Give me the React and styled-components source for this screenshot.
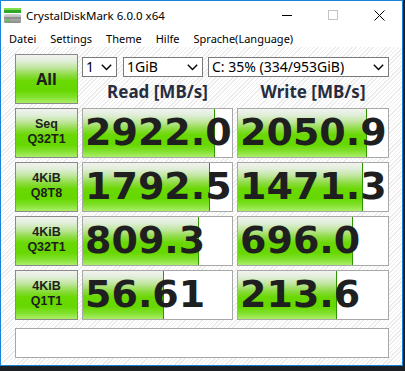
import React from 'react';
import styled, { createGlobalStyle } from 'styled-components';

const Global = createGlobalStyle`
  html, body { margin: 0; padding: 0; background: #1c1f24; }
  body { width: 405px; height: 371px; overflow: hidden; }
  #root { width: 405px; height: 371px; }
`;

const GREEN = `linear-gradient(180deg,
  #f1f3ef 0%, #e2eedb 12%, #bfe69c 27%, #8fdc45 41%, #6ad804 54%,
  #66d800 74%, #80e02a 87%, #aaee68 100%)`;

const Window = styled.div`
  width: 403px;
  height: 366px;
  box-sizing: border-box;
  border: 1px solid #1883d7;
  display: flex;
  flex-direction: column;
  background: #fff;
  font-family: "Noto Sans", "Open Sans", sans-serif;
  color: #000;
`;

const TitleBar = styled.div`
  height: 28px;
  display: flex;
  align-items: center;
  background: #fff;
`;

const AppIcon = styled.svg`
  margin-left: 3px;
  flex: none;
`;

const Title = styled.div`
  margin-left: 5px;
  font-size: 11.5px;
  flex: 1;
`;

const CaptionButton = styled.div`
  width: 46px;
  height: 28px;
  display: flex;
  align-items: center;
  justify-content: center;
`;

const MenuBar = styled.div`
  height: 18px;
  display: flex;
  align-items: center;
  padding-left: 1px;
  background: #fff;
  font-size: 11px;
`;

const MenuItem = styled.span`
  padding: 0 7px;
`;

const Client = styled.div`
  flex: 1;
  padding: 7px 0 0 14px;
  background: repeating-linear-gradient(135deg, #ffffff 0px, #ffffff 2px, #ebebeb 2px, #ebebeb 3px);
`;

const Grid = styled.div`
  display: grid;
  grid-template-columns: 63px 151px 152px;
  grid-auto-rows: 50px;
  column-gap: 4px;
  row-gap: 4px;
`;

const GreenButton = styled.div`
  box-sizing: border-box;
  border: 1px solid #8a8a8a;
  background: ${GREEN};
  display: flex;
  flex-direction: column;
  align-items: center;
  justify-content: center;
  font-weight: 700;
  color: #1e1e1e;
  font-family: ${p => (p.$big ? '"Noto Sans", sans-serif' : '"Liberation Sans", Arial, sans-serif')};
  font-size: ${p => (p.$big ? '16px' : '12.5px')};
  line-height: ${p => (p.$big ? '20px' : '14.5px')};
  padding-bottom: ${p => (p.$big ? '1px' : '3px')};
`;

const TopPanel = styled.div`
  grid-column: 2 / 4;
  display: flex;
  flex-direction: column;
`;

const SelectRow = styled.div`
  display: flex;
  margin-top: 3px;
  height: 20px;
`;

const DropDown = styled.div`
  box-sizing: border-box;
  width: ${p => p.$w || 'auto'};
  flex: ${p => (p.$w ? 'none' : '1')};
  margin-right: ${p => p.$mr || '0'};
  height: 20px;
  border: 1px solid #7a7a7a;
  background: #fff;
  display: flex;
  align-items: center;
  padding: 0 4px 0 3px;
  font-size: 14px;
  line-height: 18px;
  color: #000;
`;

const DropText = styled.span`
  flex: 1;
  white-space: nowrap;
`;

const HeaderRow = styled.div`
  display: grid;
  grid-template-columns: 151px 152px;
  column-gap: 4px;
  margin-top: 5px;
`;

const Header = styled.div`
  text-align: center;
  font-size: 17px;
  line-height: 20px;
  font-weight: 700;
  color: #262d40;
`;

const BarCell = styled.div`
  position: relative;
  box-sizing: border-box;
  border: 1px solid #a8a8a8;
  background: #fff;
  overflow: hidden;
`;

const Fill = styled.div`
  position: absolute;
  left: 0;
  top: 0;
  bottom: 0;
  box-sizing: border-box;
  border-right: 1px solid #2e9400;
  background: ${GREEN};
`;

const Value = styled.div`
  position: relative;
  padding-left: 2px;
  font-family: "DejaVu Sans", Verdana, sans-serif;
  font-weight: 700;
  font-size: 38px;
  line-height: 47px;
  color: #1f1f1f;
  white-space: nowrap;
`;

const Comment = styled.div`
  margin-top: 8px;
  width: 374px;
  height: 30px;
  box-sizing: border-box;
  border: 1px solid #a8a8a8;
  background: #fff;
`;

const Chevron = () => (
  <svg width="11" height="7" viewBox="0 0 11 7">
    <path d="M0.8 0.8 L5.5 5.5 L10.2 0.8" fill="none" stroke="#000" strokeWidth="1.4" />
  </svg>
);

const rows = [
  { l1: 'Seq', l2: 'Q32T1', r: '2922.0', rp: 132, w: '2050.9', wp: 129 },
  { l1: '4KiB', l2: 'Q8T8', r: '1792.5', rp: 127, w: '1471.3', wp: 125 },
  { l1: '4KiB', l2: 'Q32T1', r: '809.3', rp: 116, w: '696.0', wp: 115 },
  { l1: '4KiB', l2: 'Q1T1', r: '56.61', rp: 81, w: '213.6', wp: 99 },
];

export default function App() {
  return (
    <>
      <Global />
      <Window>
        <TitleBar>
          <AppIcon width="17" height="15" viewBox="0 0 17 15">
            <defs>
              <linearGradient id="drv" x1="0" y1="0" x2="0" y2="1">
                <stop offset="0" stopColor="#d4d4d4" />
                <stop offset="1" stopColor="#8a8a8a" />
              </linearGradient>
            </defs>
            <rect x="0" y="0" width="17" height="2" fill="#7fe04a" />
            <rect x="0" y="2" width="17" height="3" fill="#2fa82a" />
            <rect x="0" y="6" width="17" height="9" rx="1.5" fill="url(#drv)" />
            <rect x="0" y="9.5" width="17" height="1" fill="#6d6d6d" />
            <rect x="2" y="11.5" width="4" height="2" fill="#4fd040" />
          </AppIcon>
          <Title>CrystalDiskMark 6.0.0 x64</Title>
          <CaptionButton>
            <svg width="10" height="10" viewBox="0 0 10 10">
              <rect x="0" y="5" width="10" height="1" fill="#000" />
            </svg>
          </CaptionButton>
          <CaptionButton>
            <svg width="10" height="10" viewBox="0 0 10 10">
              <rect x="0.5" y="0.5" width="9" height="9" fill="none" stroke="#c4c4c4" />
            </svg>
          </CaptionButton>
          <CaptionButton>
            <svg width="11" height="11" viewBox="0 0 11 11">
              <path d="M0.5 0.5 L10.5 10.5 M10.5 0.5 L0.5 10.5" stroke="#000" strokeWidth="1" fill="none" />
            </svg>
          </CaptionButton>
        </TitleBar>
        <MenuBar>
          <MenuItem>Datei</MenuItem>
          <MenuItem>Settings</MenuItem>
          <MenuItem>Theme</MenuItem>
          <MenuItem>Hilfe</MenuItem>
          <MenuItem>Sprache(Language)</MenuItem>
        </MenuBar>
        <Client>
          <Grid>
            <GreenButton $big>All</GreenButton>
            <TopPanel>
              <SelectRow>
                <DropDown $w="35px" $mr="6px">
                  <DropText>1</DropText>
                  <Chevron />
                </DropDown>
                <DropDown $w="80px" $mr="5px">
                  <DropText>1GiB</DropText>
                  <Chevron />
                </DropDown>
                <DropDown>
                  <DropText>C: 35% (334/953GiB)</DropText>
                  <Chevron />
                </DropDown>
              </SelectRow>
              <HeaderRow>
                <Header>Read [MB/s]</Header>
                <Header>Write [MB/s]</Header>
              </HeaderRow>
            </TopPanel>
            {rows.map((r, i) => (
              <React.Fragment key={i}>
                <GreenButton>
                  <span>{r.l1}</span>
                  <span>{r.l2}</span>
                </GreenButton>
                <BarCell>
                  <Fill style={{ width: `${r.rp}px` }} />
                  <Value>{r.r}</Value>
                </BarCell>
                <BarCell>
                  <Fill style={{ width: `${r.wp}px` }} />
                  <Value>{r.w}</Value>
                </BarCell>
              </React.Fragment>
            ))}
          </Grid>
          <Comment />
        </Client>
      </Window>
    </>
  );
}
